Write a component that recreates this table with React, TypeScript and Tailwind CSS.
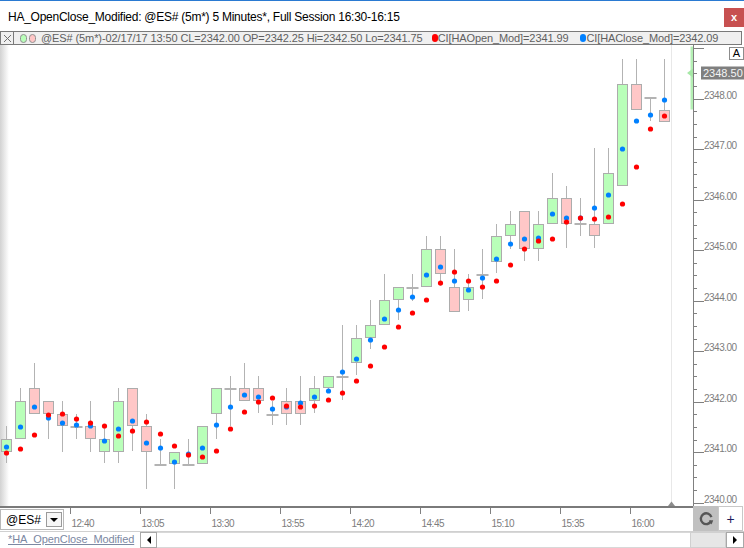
import React from "react";

// [type, bodyTop, bodyBottom, wickTop, wickBottom, redDot, blueDot] in screen y
const CANDLES: Array<[string, number, number, number, number, number, number]> = [
  ["g", 439, 451, 426, 463, 453, 447],
  ["g", 401, 438, 388, 438, 449, 427],
  ["r", 388, 413, 363, 413, 435, 407],
  ["r", 401, 413, 401, 439, 415, 418],
  ["r", 414, 425, 401, 452, 414, 423],
  ["d", 427, 427, 414, 439, 419, 425],
  ["r", 426, 438, 401, 452, 423, 426],
  ["g", 439, 451, 426, 463, 426, 441],
  ["g", 401, 451, 388, 463, 436, 429],
  ["r", 388, 425, 388, 451, 431, 421],
  ["r", 426, 451, 414, 489, 422, 443],
  ["d", 465, 465, 439, 465, 434, 448],
  ["g", 452, 463, 452, 489, 446, 462],
  ["d", 465, 465, 439, 465, 455, 454],
  ["g", 426, 463, 426, 463, 457, 448],
  ["g", 388, 413, 388, 439, 451, 425],
  ["d", 389, 389, 376, 426, 429, 407],
  ["r", 388, 400, 363, 400, 412, 395],
  ["r", 388, 400, 376, 413, 402, 397],
  ["d", 415, 415, 401, 425, 398, 409],
  ["r", 401, 413, 388, 425, 406, 407],
  ["r", 401, 413, 376, 425, 407, 403],
  ["g", 388, 400, 376, 413, 406, 397],
  ["g", 376, 387, 376, 391, 400, 391],
  ["d", 377, 377, 325, 400, 393, 372],
  ["g", 338, 362, 325, 375, 381, 359],
  ["g", 325, 337, 300, 349, 366, 340],
  ["g", 300, 324, 274, 324, 347, 319],
  ["g", 287, 299, 287, 320, 327, 310],
  ["d", 288, 288, 274, 301, 313, 297],
  ["g", 249, 286, 236, 286, 300, 275],
  ["r", 249, 273, 236, 286, 283, 267],
  ["r", 287, 311, 249, 311, 272, 281],
  ["g", 287, 299, 274, 311, 281, 290],
  ["d", 275, 275, 249, 299, 287, 278],
  ["g", 236, 261, 224, 273, 281, 259],
  ["g", 224, 235, 211, 249, 265, 244],
  ["r", 211, 248, 211, 261, 249, 239],
  ["g", 224, 248, 211, 261, 241, 238],
  ["g", 198, 223, 173, 223, 239, 214],
  ["r", 198, 223, 186, 248, 222, 218],
  ["d", 224, 224, 198, 236, 218, 218],
  ["r", 224, 235, 148, 248, 219, 208],
  ["g", 173, 223, 148, 223, 217, 195],
  ["g", 84, 185, 59, 185, 204, 149],
  ["r", 84, 109, 59, 109, 167, 121],
  ["d", 98, 98, 98, 121, 129, 115],
  ["r", 110, 121, 59, 121, 116, 100],
];

const TIMES = ["12:40", "13:05", "13:30", "13:55", "14:20", "14:45", "15:10", "15:35", "16:00"];

const WICK = "#b3b3b3";

function PriceChart() {
  const ticks = Array.from({ length: 37 }, (_, k) => ({
    k,
    y: Math.round(502.7 - k * 12.625) + 0.5,
  }));
  return (
    <svg width={744} height={475} viewBox="0 31 744 475" className="block">
      {/* now line */}
      <line x1={671.5} x2={671.5} y1={31} y2={506} stroke="#e8e8e8" />
      <polygon points="668,506 675,506 671.5,501.5" fill="#8c8c8c" />

      {CANDLES.map(([t, top, bot, wt, wb], i) => {
        const x = 6.5 + 14 * i;
        return (
          <g key={i}>
            <line x1={x} x2={x} y1={wt} y2={wb} stroke={WICK} />
            {t === "d" ? (
              <line x1={x - 6} x2={x + 6} y1={top} y2={top} stroke={WICK} strokeWidth={2} />
            ) : (
              <rect
                x={x - 5}
                y={top + 0.5}
                width={10}
                height={bot - top}
                fill={t === "g" ? "#b9ffb9" : "#ffc7c7"}
                stroke="#acacac"
              />
            )}
          </g>
        );
      })}
      {CANDLES.map(([, , , , , red, blue], i) => {
        const x = 6.5 + 14 * i;
        return (
          <g key={"d" + i}>
            <circle cx={x} cy={blue} r={2.6} fill="#0080ff" />
            <circle cx={x} cy={red} r={2.6} fill="#ff0000" />
          </g>
        );
      })}

      {/* price axis */}
      <rect x={690.5} y={46.5} width={2.5} height={63} fill="#b4f0b4" />
      <polygon points="687,73 693,68.5 693,77.5" fill="#a6e8a6" />
      <line x1={693.5} x2={693.5} y1={31} y2={506} stroke="#808080" />
      {ticks.map(({ k, y }) =>
        k % 4 === 0 ? (
          <g key={k}>
            <line x1={693} x2={704} y1={y} y2={y} stroke="#808080" />
            {k < 36 && (
              <text
                x={704}
                y={y - 1}
                fontSize={10}
                letterSpacing={-0.5}
                fill="#7d7d7d"
                fontFamily="'Liberation Sans', Arial, sans-serif"
              >
                {(2340 + k / 4).toFixed(2)}
              </text>
            )}
          </g>
        ) : (
          <line key={k} x1={693} x2={697} y1={y} y2={y} stroke="#808080" />
        )
      )}
      <rect x={701} y={66.5} width={43} height={13} fill="#7f7f7f" />
      <text x={703} y={77} fontSize={11} fill="#f4f4f4" fontFamily="'Liberation Sans', Arial, sans-serif">
        2348.50
      </text>
    </svg>
  );
}

function TimeAxis() {
  return (
    <svg width={629} height={23} viewBox="64 0 629 23" className="block">
      {TIMES.map((t, i) => {
        const x = 70.5 + 70 * i;
        return (
          <g key={t}>
            <line x1={x} x2={x} y1={0} y2={6} stroke="#808080" />
            <text
              x={x + 1}
              y={19}
              fontSize={10}
              letterSpacing={-0.5}
              fill="#7d7d7d"
              fontFamily="'Liberation Sans', Arial, sans-serif"
            >
              {t}
            </text>
          </g>
        );
      })}
    </svg>
  );
}

export default function App() {
  return (
    <div className="w-[744px] h-[548px] bg-white overflow-hidden flex flex-col font-['Liberation_Sans',Arial,sans-serif]">
      <div className="h-px bg-[#2a7ad2]" />

      {/* title bar */}
      <div className="h-[30px] flex justify-between">
        <div className="pl-2 pt-[7px] text-[12px] text-black tracking-[-0.25px] whitespace-nowrap">
          HA_OpenClose_Modified: @ES# (5m*) 5 Minutes*, Full Session 16:30-16:15
        </div>
        <div className="mt-[7px] w-[20px] h-[19px] bg-[#c75050] text-white text-[11px] font-bold flex items-center justify-center leading-none">
          x
        </div>
      </div>

      {/* chart */}
      <div className="relative h-[475px] bg-[linear-gradient(to_right,#d2d2d2,#ffffff_9px)]">
        <PriceChart />
        <div className="absolute top-0 left-0 w-[742px] h-[14px] bg-[#f0f0f0] border border-[#7a7a7a] flex items-center text-[11px] leading-none text-[#5f5f5f] tracking-[-0.1px] whitespace-nowrap">
          <div className="w-[13px] h-full border-r border-[#7a7a7a] flex items-center justify-center">
            <svg width="9" height="9" viewBox="0 0 9 9">
              <path d="M1 1L8 8M8 1L1 8" stroke="#707070" strokeWidth="1" />
            </svg>
          </div>
          <span className="ml-[6px] w-[7px] h-[9px] rounded-full bg-[#b9ffb9] border border-[#909090]" />
          <span className="ml-[2px] w-[7px] h-[9px] rounded-full bg-[#ffc7c7] border border-[#909090]" />
          <span className="ml-[5px]">
            @ES# (5m*)-02/17/17 13:50 CL=2342.00 OP=2342.25 Hi=2342.50 Lo=2341.75
          </span>
          <span className="ml-[9px] w-[6px] h-[8px] rounded-full bg-[#ff0000]" />
          <span>CI[HAOpen_Mod]=2341.99</span>
          <span className="ml-[12px] w-[6px] h-[8px] rounded-full bg-[#0080ff]" />
          <span>CI[HAClose_Mod]=2342.09</span>
        </div>
        <div className="absolute top-[16px] left-[729px] w-[15px] h-[13px] border border-[#8c8c8c] bg-white text-[11px] leading-none text-black flex items-center justify-center">
          A
        </div>
      </div>

      {/* time axis */}
      <div className="h-[25px] flex">
        <div className="w-[693px] border-t-2 border-[#7a7a7a] flex">
          <div className="mt-px w-[64px] h-[21px] border border-[#b8b8b8] bg-white flex items-center">
            <span className="flex-1 pl-[5px] text-[12px] text-black">@ES#</span>
            <div className="w-[16px] h-[15px] mr-px border border-[#9a9a9a] bg-[#f6f6f6] flex items-center justify-center">
              <svg width="8" height="4" viewBox="0 0 8 4">
                <path d="M0 0H8L4 4Z" fill="#000" />
              </svg>
            </div>
          </div>
          <TimeAxis />
        </div>
        <div className="w-[25px] bg-[#c0c0c0] flex items-center justify-center">
          <svg width="16" height="16" viewBox="0 0 16 16">
            <path d="M13.2 9.8A5.4 5.4 0 1 1 13.4 6.2" fill="none" stroke="#555" strokeWidth="2.4" />
            <path d="M10.8 9.6L15.2 9.2L13.6 13.6Z" fill="#555" />
          </svg>
        </div>
        <div className="w-[25px] border border-[#c8c8c8] bg-white flex items-center justify-center text-[14px] leading-none text-[#1c1c5c]">
          +
        </div>
      </div>

      {/* tab + scrollbar */}
      <div className="h-[17px] flex border-t border-[#d0d0d0]">
        <div className="w-[140px] pl-2 text-[11px] leading-[15px] text-[#7c88a2] underline tracking-[-0.1px] whitespace-nowrap">
          *HA_OpenClose_Modified
        </div>
        <div className="flex-1 flex">
          <div className="w-[17px] border border-[#a8a8a8] bg-white flex items-center justify-center">
            <svg width="4" height="8" viewBox="0 0 4 8">
              <path d="M4 0V8L0 4Z" fill="#000" />
            </svg>
          </div>
          <div className="flex-1 border-y border-[#d8d8d8] bg-white" />
          <div className="w-[36px] border border-[#d0d0d0] bg-[#e6e6e6]" />
          <div className="w-[18px] border border-[#a8a8a8] bg-white flex items-center justify-center">
            <svg width="4" height="8" viewBox="0 0 4 8">
              <path d="M0 0V8L4 4Z" fill="#000" />
            </svg>
          </div>
        </div>
      </div>
    </div>
  );
}
